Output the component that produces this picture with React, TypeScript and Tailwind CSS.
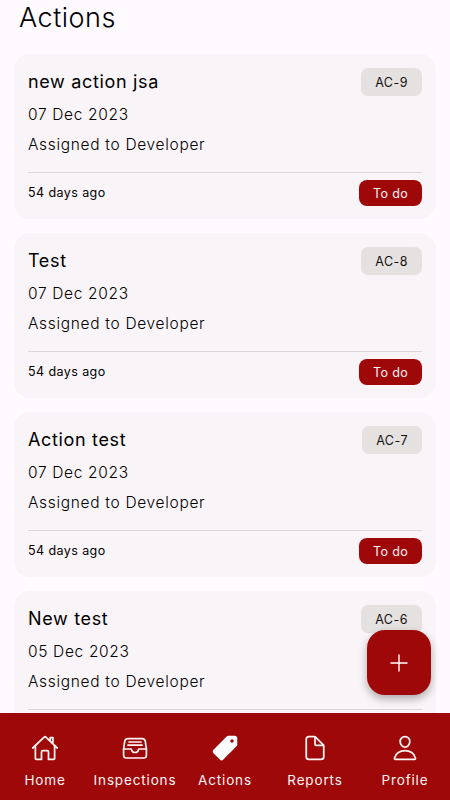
import React from 'react';
import { IoDocumentOutline, IoHomeOutline, IoPersonOutline, IoPricetag } from 'react-icons/io5';

interface Action {
  id: string;
  title: string;
  date: string;
  assignee: string;
  age: string;
  status: string;
}

interface IconProps {
  size?: number;
  className?: string;
}

const actions: Action[] = [
  { id: 'AC-9', title: 'new action jsa', date: '07 Dec 2023', assignee: 'Developer', age: '54 days ago', status: 'To do' },
  { id: 'AC-8', title: 'Test', date: '07 Dec 2023', assignee: 'Developer', age: '54 days ago', status: 'To do' },
  { id: 'AC-7', title: 'Action test', date: '07 Dec 2023', assignee: 'Developer', age: '54 days ago', status: 'To do' },
  { id: 'AC-6', title: 'New test', date: '05 Dec 2023', assignee: 'Developer', age: '', status: '' },
];

const TrayIcon: React.FC<IconProps> = ({ size = 28, className }) => (
  <svg
    width={size}
    height={size}
    viewBox="0 0 28 28"
    fill="none"
    stroke="currentColor"
    strokeWidth="1.7"
    strokeLinecap="round"
    strokeLinejoin="round"
    className={className}
  >
    <path d="M2.6 15 L3.7 7.4 Q4.1 4.6 6.9 4.6 H21.1 Q23.9 4.6 24.3 7.4 L25.4 15 V21.3 Q25.4 24 22.7 24 H5.3 Q2.6 24 2.6 21.3 Z" />
    <path d="M2.6 15 H9.6 Q10.4 15 10.6 15.8 C11.2 19.4 16.8 19.4 17.4 15.8 Q17.6 15 18.4 15 H25.4" />
    <path d="M8 8 H20 M7 11.2 H21" />
  </svg>
);

const PlusIcon: React.FC<IconProps> = ({ size = 28 }) => (
  <svg width={size} height={size} viewBox="0 0 28 28" fill="none" stroke="currentColor" strokeWidth="1.4" strokeLinecap="round">
    <path d="M14 6 V22 M6 14 H22" />
  </svg>
);

const tabs = [
  { label: 'Home', Icon: IoHomeOutline },
  { label: 'Inspections', Icon: TrayIcon },
  { label: 'Actions', Icon: IoPricetag },
  { label: 'Reports', Icon: IoDocumentOutline },
  { label: 'Profile', Icon: IoPersonOutline },
];

const ActionCard: React.FC<{ action: Action }> = ({ action }) => (
  <article className="h-[165px] shrink-0 rounded-[16px] bg-[#f9f4f7] px-3.5 pt-3.5">
    <div className="flex h-[28px] items-center justify-between">
      <h2 className="text-[18px] leading-[28px] tracking-[0.66px] text-black">{action.title}</h2>
      <span className="flex h-[28px] items-center rounded-[7px] bg-[#e6e1e1] px-3.5 pt-[2px] text-[12.5px] tracking-[0.5px] text-[#111]">
        {action.id}
      </span>
    </div>
    <p className="mt-[4px] text-[15.5px] leading-[30px] font-light tracking-[0.66px] text-black">{action.date}</p>
    <p className="text-[15.5px] leading-[30px] font-light tracking-[0.68px] text-black">Assigned to {action.assignee}</p>
    <div className="mt-[12px] flex items-center justify-between border-t border-[#dcd6d9] pt-[7px]">
      <span className="pt-px text-[12.5px] tracking-[0.42px] text-black">{action.age}</span>
      {action.status && (
        <span className="flex h-[26px] items-center rounded-[8px] bg-[#9f0808] px-3.5 pt-[2px] text-[12.5px] tracking-[0.35px] text-[#fff3f3]">
          {action.status}
        </span>
      )}
    </div>
  </article>
);

const App: React.FC = () => {
  return (
    <div className="relative flex h-screen flex-col overflow-hidden bg-[#fefaff] font-['Inter',sans-serif]">
      <main className="min-h-0 flex-1 overflow-hidden px-3.5">
        <h1 className="h-[54px] pl-[5px] text-[27px] leading-[35px] font-light tracking-[0.5px] text-black">Actions</h1>
        <div className="flex flex-col gap-3.5">
          {actions.map(action => (
            <ActionCard key={action.id} action={action} />
          ))}
        </div>
      </main>

      <button
        aria-label="Add action"
        className="absolute top-[630px] right-[19px] flex h-[65px] w-[64px] items-center justify-center rounded-[18px] bg-[#9f0808] text-white shadow-[0_4px_8px_rgba(0,0,0,0.3)]"
      >
        <PlusIcon />
      </button>

      <nav className="flex h-[87px] shrink-0 bg-[#9f0808] text-[#fff3f3]">
        {tabs.map(({ label, Icon }) => (
          <div key={label} className="flex w-1/5 flex-col items-center pt-[21px]">
            <Icon size={28} className={label === 'Actions' ? 'text-white' : ''} />
            <span className="mt-[8px] text-[13.5px] leading-[20px] tracking-[0.85px]">{label}</span>
          </div>
        ))}
      </nav>
    </div>
  );
};

export default App;
